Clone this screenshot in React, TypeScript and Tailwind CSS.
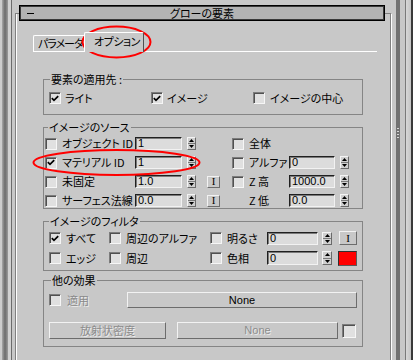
import React from "react";

const Box = ({ on = false, size = "w-[12px] h-[12px]" }: { on?: boolean; size?: string }) => (
  <span className={`${size} shrink-0 flex items-center justify-center bg-[#e0e0e0] border border-t-[#7c7c7c] border-l-[#7c7c7c] border-b-[#f6f6f6] border-r-[#f6f6f6] shadow-[inset_1px_1px_0_#505050]`}>
    {on && (
      <svg width="8" height="7" viewBox="0 0 8 7">
        <path d="M0.8 3.2 L3 5.4 L7.2 1.2" fill="none" stroke="#000" strokeWidth="1.7" />
      </svg>
    )}
  </span>
);

const Field = ({ v, w, h = "h-[13px]" }: { v: string; w: string; h?: string }) => (
  <span className={`${w} ${h} shrink-0 flex items-center pl-[2px] bg-[#dcdcdc] border border-t-[#202020] border-l-[#202020] border-b-[#f2f2f2] border-r-[#f2f2f2] shadow-[inset_1px_1px_0_#7a7a7a] [font-family:'Liberation_Sans',sans-serif] text-[11px] leading-none`}>
    {v}
  </span>
);

const Spin = ({ w = "w-[9px]", h = "h-[13px]" }: { w?: string; h?: string }) => (
  <span className={`${w} ${h} shrink-0 flex flex-col bg-[#d0d0d0] border border-t-[#f4f4f4] border-l-[#f4f4f4] border-b-[#6a6a6a] border-r-[#6a6a6a]`}>
    <span className="flex-1 flex items-center justify-center border-b border-b-[#7a7a7a]">
      <svg width="5" height="3" viewBox="0 0 5 3"><path d="M2.5 0L5 3H0Z" fill="#000" /></svg>
    </span>
    <span className="flex-1 flex items-center justify-center">
      <svg width="5" height="3" viewBox="0 0 5 3"><path d="M0 0H5L2.5 3Z" fill="#000" /></svg>
    </span>
  </span>
);

const Btn = ({ children, w, h, dim = false, cls = "" }: { children?: React.ReactNode; w: string; h: string; dim?: boolean; cls?: string }) => (
  <span className={`${w} ${h} ${cls} shrink-0 flex items-center justify-center bg-[#c8c8c8] border border-t-[#f2f2f2] border-l-[#f2f2f2] border-b-[#6c6c6c] border-r-[#6c6c6c] leading-none ${dim ? "text-[#8c8c8c] [text-shadow:1px_1px_0_#ececec]" : "text-black"}`}>
    {children}
  </span>
);

const IBtn = ({ w = "w-[13px]", h = "h-[12px]", cls = "" }: { w?: string; h?: string; cls?: string }) => (
  <Btn w={w} h={h} cls={cls}>
    <span className="[font-family:'Liberation_Serif',serif] text-[11px]">I</span>
  </Btn>
);

export default function App() {
  return (
    <div className="relative w-[413px] h-[360px] overflow-hidden bg-[#c8c8c8] flex text-black text-[11px] leading-none whitespace-nowrap [font-family:'Noto_Sans_CJK_JP',sans-serif] [font-feature-settings:'palt']">
      {/* left chrome */}
      <div className="flex h-full shrink-0">
        <div className="w-[2px] bg-[#cdcdcd]" />
        <div className="w-[6px] bg-gradient-to-r from-[#a9a9a9] via-[#6c6c6c] to-[#9c9c9c]" />
        <div className="w-[3px] bg-[#d2d2d2]" />
        <div className="w-[1px] bg-[#6c6c6c]" />
        <div className="w-[3px] bg-[#c8c8c8]" />
      </div>

      {/* rollout */}
      <div className="w-[377px] shrink-0 flex flex-col">
        <div className="relative z-10 mt-[5px] ml-[4px] w-[366px] h-[16px] bg-[#b3b3b3] border border-black shadow-[inset_1px_1px_0_#3a3a3a,inset_-1px_-1px_0_#3a3a3a] grid grid-cols-[1fr_auto_1fr] items-center">
          <div className="pl-[7px] flex items-center">
            <span className="w-[7px] h-[1px] bg-black" />
          </div>
          <span className="text-[11px]">グローの要素</span>
          <div />
        </div>

        <div className="-mt-[8px] flex-1 flex flex-col border-l border-t border-r border-l-[#808080] border-t-[#808080] border-r-white shadow-[inset_1px_0_0_#ffffff,inset_-1px_0_0_#808080]">
          {/* tabs */}
          <div className="mt-[18px] ml-[17px] w-[344px] flex flex-col">
            <div className="flex items-end h-[19px]">
              <div className="w-[52px] h-[16px] pl-[4px] flex items-center tracking-[-1px] border-l border-t border-r border-l-white border-t-white border-r-[#808080] rounded-tl-[2px]">
                パラメータ
              </div>
              <div className="relative z-10 -ml-[1px] -mb-[1px] w-[60px] h-[20px] pl-[9px] pb-[2px] flex items-center tracking-[-0.5px] bg-[#c8c8c8] border-l border-t border-r border-l-white border-t-white border-r-[#505050] rounded-t-[2px]">
                オプション
              </div>
            </div>
            <div className="h-[1px] bg-white" />
          </div>

          {/* 要素の適用先 */}
          <fieldset className="mt-[21px] ml-[27px] w-[320px] border border-[#858585]">
            <legend className="ml-[6px] px-[1px] leading-[12px] h-[12px]">要素の適用先 :</legend>
            <div className="pt-[7px] pb-[10px] pl-[5px] flex h-[29px]">
              <div className="w-[102px] h-[12px] flex items-center gap-[4px]"><Box on /><span>ライト</span></div>
              <div className="w-[102px] h-[12px] flex items-center gap-[4px]"><Box on /><span>イメージ</span></div>
              <div className="w-[102px] h-[12px] flex items-center gap-[5px]"><Box /><span>イメージの中心</span></div>
            </div>
          </fieldset>

          {/* イメージのソース */}
          <fieldset className="mt-[6px] ml-[27px] w-[320px] border border-[#858585]">
            <legend className="ml-[4px] px-[1px] leading-[12px] h-[12px]">イメージのソース</legend>
            <div className="pt-[4px] pb-[1px] pl-[1px] flex flex-col gap-[6px]">
              <div className="h-[13px] flex items-center">
                <Box />
                <span className="ml-[5px] w-[73px]">オブジェクト ID</span>
                <Field v="1" w="w-[47px]" />
                <span className="ml-[5px]"><Spin /></span>
                <span className="ml-[11px] w-[13px]" />
                <span className="ml-[12px]"><Box /></span>
                <span className="ml-[5px] w-[40px]">全体</span>
              </div>
              <div className="h-[13px] flex items-center">
                <Box on />
                <span className="ml-[5px] w-[73px]">マテリアル ID</span>
                <Field v="1" w="w-[47px]" />
                <span className="ml-[5px]"><Spin /></span>
                <span className="ml-[11px] w-[13px]" />
                <span className="ml-[12px]"><Box /></span>
                <span className="ml-[5px] w-[40px]">アルファ</span>
                <Field v="0" w="w-[46px]" />
                <span className="ml-[5px]"><Spin /></span>
              </div>
              <div className="h-[13px] flex items-center">
                <Box />
                <span className="ml-[5px] w-[73px]">未固定</span>
                <Field v="1.0" w="w-[47px]" />
                <span className="ml-[5px]"><Spin /></span>
                <IBtn cls="ml-[11px]" />
                <span className="ml-[12px]"><Box /></span>
                <span className="ml-[5px] w-[40px]">Z 高</span>
                <Field v="1000.0" w="w-[46px]" />
                <span className="ml-[5px]"><Spin /></span>
              </div>
              <div className="h-[13px] flex items-center">
                <Box />
                <span className="ml-[5px] w-[73px]">サーフェス法線</span>
                <Field v="0.0" w="w-[47px]" />
                <span className="ml-[5px]"><Spin /></span>
                <IBtn cls="ml-[11px]" />
                <span className="ml-[12px] w-[12px]" />
                <span className="ml-[5px] w-[40px]">Z 低</span>
                <Field v="0.0" w="w-[46px]" />
                <span className="ml-[5px]"><Spin /></span>
              </div>
            </div>
          </fieldset>

          {/* イメージのフィルタ */}
          <fieldset className="mt-[6px] ml-[27px] w-[320px] border border-[#858585]">
            <legend className="ml-[5px] px-[1px] leading-[12px] h-[12px]">イメージのフィルタ</legend>
            <div className="pt-[4px] pb-[4px] pl-[5px] flex flex-col gap-[5px]">
              <div className="h-[14px] flex items-center">
                <Box on />
                <span className="ml-[5px] w-[43px]">すべて</span>
                <Box />
                <span className="ml-[5px] w-[84px]">周辺のアルファ</span>
                <Box />
                <span className="ml-[5px] w-[40px]">明るさ</span>
                <Field v="0" w="w-[51px]" />
                <span className="ml-[4px]"><Spin w="w-[10px]" /></span>
                <IBtn w="w-[18px]" h="h-[14px]" cls="ml-[7px]" />
              </div>
              <div className="h-[16px] flex items-center">
                <Box />
                <span className="ml-[5px] w-[43px]">エッジ</span>
                <Box />
                <span className="ml-[5px] w-[84px]">周辺</span>
                <Box />
                <span className="ml-[5px] w-[40px]">色相</span>
                <Field v="0" w="w-[51px]" h="h-[14px]" />
                <span className="ml-[4px]"><Spin w="w-[10px]" h="h-[14px]" /></span>
                <span className="ml-[6px] w-[19px] h-[15px] bg-[#ff0000] border border-t-[#303030] border-l-[#303030] border-b-[#5a5a5a] border-r-[#5a5a5a]" />
              </div>
            </div>
          </fieldset>

          {/* 他の効果 */}
          <fieldset className="mt-[3px] ml-[27px] w-[320px] border border-[#858585]">
            <legend className="ml-[7px] px-[1px] leading-[12px] h-[12px]">他の効果</legend>
            <div className="pt-[6px] pb-[7px] pl-[5px] flex flex-col gap-[14px]">
              <div className="h-[16px] flex items-center">
                <Box />
                <span className="ml-[6px] w-[60px] text-[#8a8a8a] [text-shadow:1px_1px_0_#ececec]">適用</span>
                <Btn w="w-[230px]" h="h-[16px]">
                  <span className="[font-family:'Liberation_Sans',sans-serif] text-[11px]">None</span>
                </Btn>
              </div>
              <div className="h-[17px] flex items-center">
                <Btn w="w-[117px]" h="h-[17px]" dim>放射状密度</Btn>
                <Btn w="w-[161px]" h="h-[17px]" dim cls="ml-[11px]">
                  <span className="[font-family:'Liberation_Sans',sans-serif] text-[11px]">None</span>
                </Btn>
                <span className="ml-[4px]"><Box size="w-[14px] h-[14px]" /></span>
              </div>
            </div>
          </fieldset>
        </div>
      </div>

      {/* right chrome */}
      <div className="flex h-full shrink-0">
        <div className="w-[4px] bg-[#c8c8c8]" />
        <div className="w-[4px] bg-[#727272] flex flex-col items-center pt-[128px] gap-[2px]">
          <span className="w-[2px] h-[1px] bg-[#d8d8d8]" />
          <span className="w-[2px] h-[1px] bg-[#d8d8d8]" />
          <span className="w-[2px] h-[1px] bg-[#d8d8d8]" />
          <span className="w-[2px] h-[1px] bg-[#d8d8d8]" />
        </div>
        <div className="w-[5px] bg-[#c8c8c8]" />
        <div className="w-[1px] bg-[#7a7a7a]" />
        <div className="w-[5px] bg-gradient-to-r from-[#d8d8d8] to-[#c4c4c4]" />
        <div className="w-[2px] bg-[#3a3a3a]" />
      </div>

      {/* red annotation ellipses */}
      <svg className="absolute left-0 top-0 pointer-events-none" width="413" height="360">
        <ellipse cx="116.5" cy="42" rx="34" ry="15.5" fill="none" stroke="#ff0000" strokeWidth="2" />
        <ellipse cx="116.5" cy="162.5" rx="83" ry="12.5" fill="none" stroke="#ff0000" strokeWidth="2" />
      </svg>
    </div>
  );
}
